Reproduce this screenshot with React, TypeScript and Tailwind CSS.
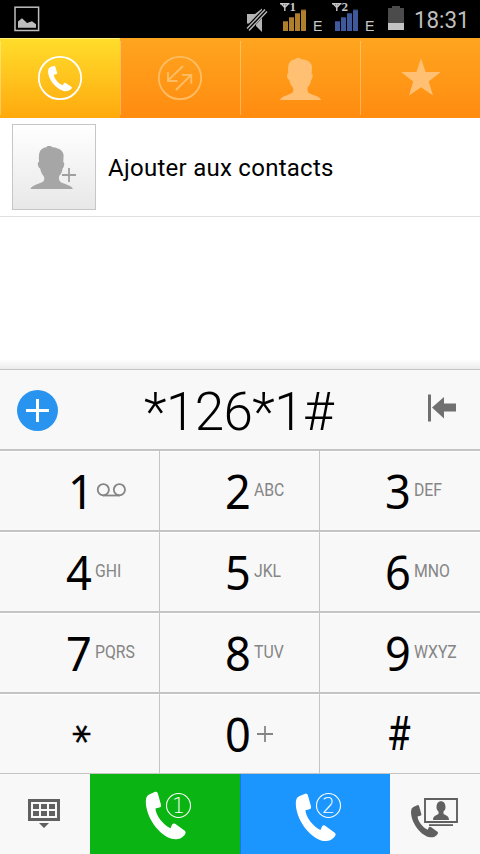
import { clsx } from 'clsx'

type Key = {
    digit: string
    label?: string
}

const KEYS: Key[] = [
    { digit: '1' },
    { digit: '2', label: 'ABC' },
    { digit: '3', label: 'DEF' },
    { digit: '4', label: 'GHI' },
    { digit: '5', label: 'JKL' },
    { digit: '6', label: 'MNO' },
    { digit: '7', label: 'PQRS' },
    { digit: '8', label: 'TUV' },
    { digit: '9', label: 'WXYZ' },
    { digit: '*' },
    { digit: '0' },
    { digit: '#' },
]

const HANDSET = 'M0 30Q0 14 10 9L28 1Q34 -1 36 5L46 41Q47 46 41 48L29 51C30 72 52 100 74 110L79 99Q83 94 88 97L117 118Q122 122 118 128C108 143 92 145 78 142C38 130 0 76 0 30Z'
const PERSON = 'M0 126C3 114 29 111 37 104C42 99 40 93 38 88C32 82 29 72 28 66C22 64 20 52 22 48L25 46C23 24 25 11 39 5C44 3 48 4 50 2L45 1C54 -1 61 0 64 4C84 6 95 14 96 28L95 47C100 49 98 62 93 66C92 76 89 82 83 88C82 96 82 102 88 106C98 112 119 114 123 126Z'

function Signal({ sim, color, dark }: { sim: string; color: string; dark: string }) {
    return (
        <svg width="42" height="38" viewBox="0 0 42 38">
            <path d="M0 3.7h9.5M1.5 4l3.3 3.5L8.100 4M4.800 3.5V11" fill="none" stroke="#c8c8c8" strokeWidth="1.4" />
            <text x="9.4" y="11" fontSize="13" fontWeight="700" fill="#c8c8c8" fontFamily="Liberation Serif, serif">{sim}</text>
            <path d="M3 21.5h5V31H3zM9 17.5h5V31H9zM15 13.5h5V31h-5zM21 10h5V31h-5z" fill={color} />
            <path d="M3 21h5v1H3zM9 17h5v1H9zM15 13h5v1h-5zM21 9.5h5v1h-5z" fill={dark} />
            <text x="33" y="31.3" fontSize="14" fill="#c8c8c8" textLength="9.5" lengthAdjust="spacingAndGlyphs" fontFamily="Liberation Sans, sans-serif">E</text>
        </svg>
    )
}

function StatusBar() {
    return (
        <header className="flex h-[38px] items-center bg-black pl-[14px]">
            <svg width="26" height="38" viewBox="0 0 26 38">
                <rect x="1" y="7.2" width="23.6" height="23.3" fill="none" stroke="#bebebe" strokeWidth="1.5" />
                <path d="M4 27.8V21.5l4-3.2 3.5 3.2 1.5 1.5 5-1.7 4 3v3.5z" fill="#bebebe" />
            </svg>
            <svg className="ml-[206px]" width="30" height="38" viewBox="0 0 30 38">
                <path d="M1 14h8l7-5.500v1.500L3 23.500H1zM10 24.500l6-6.500V32l-6-6z" fill="#b4b4b4" />
                <path d="M1 28.500L19 9.500M3 30.500L21 11.500" stroke="#b4b4b4" strokeWidth="1.500" />
            </svg>
            <div className="ml-1 flex gap-[10px]">
                <Signal sim="1" color="#b07f2b" dark="#7c5a20" />
                <Signal sim="2" color="#3f5a9c" dark="#2d4070" />
            </div>
            <svg className="ml-[14px]" width="16" height="38" viewBox="0 0 16 38">
                <path d="M4 6h8v2h4v15H0V8h4z" fill="#4b4b4b" />
                <path d="M0 23h16v7H0z" fill="#c3c3c3" />
            </svg>
            <span className="mt-[2px] ml-[10px] origin-left scale-x-[.93] text-[24px] leading-[38px] text-[#bebebe]">18:31</span>
        </header>
    )
}

function Tabs() {
    return (
        <nav className="grid h-20 grid-cols-4 bg-linear-to-b from-[#ffa51f] to-[#ff8b0f]">
            <div className="border-t border-[#ffee77] bg-linear-to-b from-[#ffdd2a] to-[#ffa90c]">
                <svg className="-mt-px" width="120" height="80" viewBox="0 0 120 80">
                    <path d="M0.5 3v74" stroke="#fff" strokeOpacity=".3" />
                    <circle cx="60" cy="40" r="21.2" fill="none" stroke="#fff" strokeWidth="1.8" />
                    <path d={HANDSET} transform="translate(48 27.7) scale(.2 .178)" fill="#fff" />
                </svg>
            </div>
            <svg width="120" height="80" viewBox="0 0 120 80">
                <path d="M0.5 3v74" stroke="#fff" strokeOpacity=".3" />
                <g fill="none" stroke="#ffbd66" strokeWidth="1.8">
                    <circle cx="60" cy="40" r="21.2" />
                    <path d="M63 28L48 42.5M48 34v9h9.5M56 52l15-15M62 36.8h9.3v9" />
                </g>
            </svg>
            <svg width="120" height="80" viewBox="0 0 120 80">
                <path d="M0.5 3v74" stroke="#fff" strokeOpacity=".3" />
                <path d={PERSON} transform="translate(40 20) scale(.3333)" fill="#ffc074" />
            </svg>
            <svg width="120" height="80" viewBox="0 0 120 80">
                <path d="M0.5 3v74" stroke="#fff" strokeOpacity=".3" />
                <path d="M61 20.2L65.6 34H80.7L68.7 43.4L73 57.4L61 49.2L49 57.4L53.2 43.4L41.2 34H56.4z" fill="#ffc074" />
            </svg>
        </nav>
    )
}

function KeyExtra({ item }: { item: Key }) {
    if (item.digit === '1') {
        return (
            <svg width="30" height="14" viewBox="0 0 30 14" className="mt-[-2px] ml-[1px]">
                <g fill="none" stroke="#858585" strokeWidth="1.8">
                    <circle cx="7.3" cy="6.7" r="5.6" />
                    <circle cx="23.4" cy="6.7" r="5.6" />
                    <path d="M7 12.5h17" />
                </g>
            </svg>
        )
    }
    if (item.digit === '0') {
        return (
            <svg width="18" height="18" viewBox="0 0 18 18" className="ml-[2px]">
                <path d="M9 1v16M1 9h16" stroke="#858585" strokeWidth="1.8" />
            </svg>
        )
    }
    return (
        <span className="-mt-[2px] origin-left scale-x-[.83] text-[19px] leading-[20px] text-[#858585]">{item.label}</span>
    )
}

function Keypad() {
    return (
        <div className="grid grid-cols-[160px_160px_160px]">
            {KEYS.map((item, i) => (
                <div
                    key={item.digit}
                    className={clsx(
                        'flex items-center border-[#c4c4c4] shadow-[inset_0_1px_0_#fff]',
                        i < 9 ? 'h-[81px] border-b-2' : 'h-[80px] border-b',
                        i % 3 < 2 && 'border-r',
                        i % 3 === 0 ? 'pl-[66px]' : 'pl-[65px]',
                    )}
                >
                    {item.digit === '*' ? (
                        <span className="ml-[3px] flex h-[26px] w-6 rotate-90 items-start justify-center font-['DejaVu_Sans'] text-[38px] leading-[38px] text-black [-webkit-text-stroke:0.5px_black]">*</span>
                    ) : item.digit === '#' ? (
                        <span className="ml-[2px] origin-left scale-x-[.8] font-['Roboto'] text-[48px] leading-[48px] text-black">#</span>
                    ) : (
                        <span className="w-[29px] font-['Noto_Sans'] text-[48px] leading-[48px] text-black">
                            <span className={clsx('inline-block origin-left scale-x-[.94]', item.digit === '1' && 'ml-[2px]')}>{item.digit}</span>
                        </span>
                    )}
                    <KeyExtra item={item} />
                </div>
            ))}
        </div>
    )
}

function CallIcon({ sim, top }: { sim: string; top: number }) {
    return (
        <svg width="150" height="80" viewBox="0 0 150 80">
            <path d={HANDSET} transform={`translate(55.8 ${top}) scale(.3333)`} fill="#fff" />
            <circle cx="88.5" cy="31.5" r="12" fill="none" stroke="#fff" strokeWidth="1.1" />
            <text x="88.5" y="39" fontSize="20.5" fontWeight="200" textAnchor="middle" fill="#fff" fontFamily="DejaVu Sans, sans-serif">{sim}</text>
        </svg>
    )
}

export default function App() {
    return (
        <div className="flex h-[854px] w-[480px] flex-col overflow-hidden bg-white font-['Roboto',sans-serif]">
            <StatusBar />
            <Tabs />

            {/* Add to contacts */}
            <div className="flex h-[99px] items-center border-b border-[#dfdfdf] pl-3">
                <div className="flex h-[86px] w-[84px] border border-[#c6c6c6] bg-linear-to-b from-white to-[#e8e8e8]">
                    <svg width="82" height="84" viewBox="13 125 82 84">
                        <path d={PERSON} transform="translate(30.5 146) scale(.345 .341)" fill="#a6a6a6" />
                        <path d="M69 168v14M62 175h14" stroke="#a0a0a0" strokeWidth="1.8" />
                    </svg>
                </div>
                <span className="mt-[2px] ml-3 text-[24px] leading-7 tracking-[0.27px] text-black">Ajouter aux contacts</span>
            </div>

            <div className="flex flex-1 flex-col justify-end">
                <div className="h-[10px] bg-linear-to-b from-white to-[#ececec]" />
            </div>

            <div className="bg-[#f8f8f8]">
                <div className="flex h-[82px] items-center border-t border-b-2 border-[#c4c4c4] pl-[17px]">
                    <svg className="mt-[1px]" width="41" height="41" viewBox="0 0 41 41">
                        <circle cx="20.5" cy="20.5" r="20.5" fill="#2894f0" />
                        <path d="M20.5 9v23M9 20.5h23" stroke="#fff" strokeWidth="3" />
                    </svg>
                    <span className="mt-[4px] ml-[86px] w-[284px] text-[53px] leading-[60px] font-light tracking-[-0.6px] text-black">*126*1#</span>
                    <svg className="-mt-[3px]" width="28" height="28" viewBox="0 0 28 28">
                        <path d="M0 0.5h3v27H0zM4 13.5L16 3v6.5h12v8H16v7z" fill="#707070" />
                    </svg>
                </div>

                <Keypad />

                <div className="flex h-20">
                    <svg width="90" height="80" viewBox="0 0 90 80">
                        <path d="M28 25h32v22H28z" fill="#606060" />
                        <path d="M31 28h26v16H31z" fill="#f8f8f8" />
                        <path d="M33 30h6v5h-6zM41 30h6v5h-6zM49 30h6v5h-6zM33 37h6v5h-6zM41 37h6v5h-6zM49 37h6v5h-6zM39 49h10l-5 5z" fill="#606060" />
                    </svg>
                    <div className="w-[150px] bg-[#09b413]">
                        <CallIcon sim="1" top={17.5} />
                    </div>
                    <div className="w-[150px] bg-[#1c96ff] shadow-[inset_1px_0_0_#1477f5]">
                        <CallIcon sim="2" top={19.3} />
                    </div>
                    <svg width="90" height="80" viewBox="390 774 90 80">
                        <path d={HANDSET} transform="translate(411 805) scale(.226)" fill="#606060" />
                        <path d="M423 797h36v27h-36z" fill="#f8f8f8" />
                        <path d="M425 799h32v23h-32z" fill="none" stroke="#606060" strokeWidth="1.9" />
                        <path d="M429 824.2h24v1.8h-24z" fill="#606060" />
                        <path d="M433 820c0-4 3-4.5 5.5-6v-2.5c-1.5-1-2-3-2-4 0-4 1.5-6.3 4.500-6.300s4.500 2.300 4.500 6.300c0 1-.5 3-2 4v2.500c2.500 1.500 5.500 2 5.500 6z" fill="#606060" />
                    </svg>
                </div>
            </div>
        </div>
    )
}
